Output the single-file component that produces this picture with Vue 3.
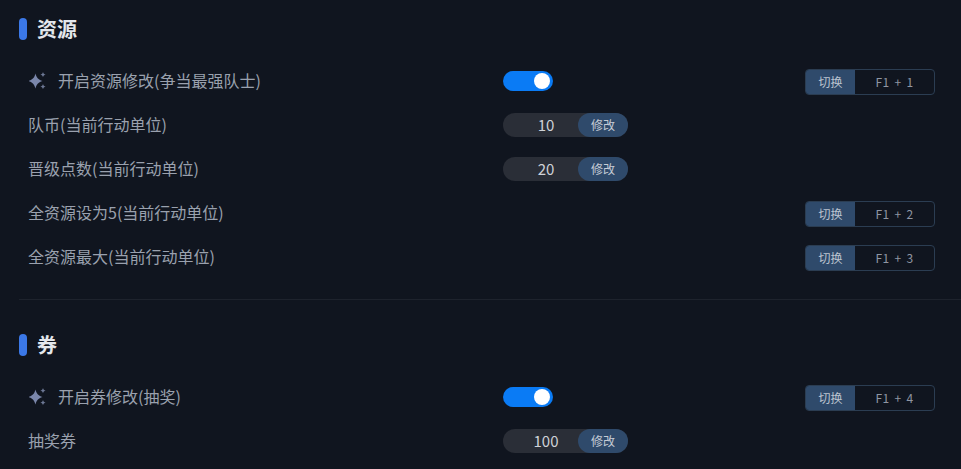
<script setup>
const sections = [
  {
    title: '资源',
    rows: [
      { label: '开启资源修改(争当最强队士)', master: true, key: 'F1 + 1' },
      { label: '队币(当前行动单位)', value: '10' },
      { label: '晋级点数(当前行动单位)', value: '20' },
      { label: '全资源设为5(当前行动单位)', key: 'F1 + 2' },
      { label: '全资源最大(当前行动单位)', key: 'F1 + 3' },
    ],
  },
  {
    title: '券',
    rows: [
      { label: '开启券修改(抽奖)', master: true, key: 'F1 + 4' },
      { label: '抽奖券', value: '100' },
    ],
  },
]
</script>

<template>
  <div class="page">
    <section v-for="(s, i) in sections" :key="s.title" class="section" :class="{ ruled: i === 0 }">
      <h2 class="title"><span class="mark"></span>{{ s.title }}</h2>
      <div v-for="r in s.rows" :key="r.label" class="row">
        <div class="label">
          <svg v-if="r.master" class="spark" viewBox="0 0 18 18" width="18" height="18">
            <path d="M6.5 1.5 C7.6 5.6 9 7.4 13.5 9 C9 10.6 7.6 12.4 6.5 16.5 C5.4 12.4 4 10.6 -0.5 9 C4 7.4 5.4 5.6 6.5 1.5 Z" fill="#7b87ab" />
            <path d="M14 0 C14.4 1.5 15 2.1 16.6 2.6 C15 3.1 14.4 3.7 14 5.2 C13.6 3.7 13 3.1 11.4 2.6 C13 2.1 13.6 1.5 14 0 Z" fill="#6d7895" />
            <path d="M14 12 C14.4 13.5 15 14.1 16.6 14.6 C15 15.1 14.4 15.7 14 17.2 C13.6 15.7 13 15.1 11.4 14.6 C13 14.1 13.6 13.5 14 12 Z" fill="#6d7895" />
          </svg>
          <span class="label-text">{{ r.label }}</span>
        </div>
        <div class="control">
          <div v-if="r.master" class="switch"><span class="knob"></span></div>
          <div v-if="r.value" class="stepper">
            <span class="num">{{ r.value }}</span>
            <span class="edit">修改</span>
          </div>
        </div>
        <div v-if="r.key" class="hotkey">
          <span class="hk-tag">切换</span>
          <span class="hk-key">{{ r.key }}</span>
        </div>
      </div>
    </section>
  </div>
</template>

<style>
html, body { margin: 0; background: #10151f; }
</style>

<style scoped>
.page {
  width: 961px;
  height: 469px;
  overflow: hidden;
  background: #10151f;
  padding-left: 19px;
  box-sizing: border-box;
  font-family: "Noto Sans CJK SC", "Noto Sans", sans-serif;
}
.section { padding-top: 30px; }
.ruled { padding-top: 14px; padding-bottom: 20px; border-bottom: 1px solid #1e232d; }
.title {
  margin: 0 0 16px;
  height: 29px;
  display: flex;
  align-items: center;
  gap: 10px;
  font-size: 20px;
  font-weight: 700;
  color: #e4e7ec;
}
.mark {
  width: 8px;
  height: 22px;
  border-radius: 4px;
  background: #3b78e7;
}
.row {
  height: 44px;
  display: flex;
  align-items: center;
  padding-left: 10px;
  color: #9aa1ae;
  font-size: 16px;
}
.label {
  width: 474px;
  display: flex;
  align-items: center;
  gap: 12px;
}
.label-text { padding-bottom: 2px; margin-left: -1px; }
.spark { flex: none; }
.control { width: 302px; display: flex; align-items: center; }
.switch {
  width: 50px;
  height: 20px;
  border-radius: 10px;
  background: #0a7bf5;
  position: relative;
}
.knob {
  position: absolute;
  right: 3px;
  top: 2px;
  width: 16px;
  height: 16px;
  border-radius: 50%;
  background: #fff;
}
.stepper {
  width: 125px;
  height: 24px;
  border-radius: 12px;
  background: #2a2e37;
  display: flex;
  align-items: center;
}
.num {
  flex: 1;
  text-align: center;
  color: #cfd2d8;
  font-size: 15px;
  padding-left: 11px;
  padding-bottom: 2px;
}
.edit {
  width: 50px;
  height: 24px;
  line-height: 23px;
  border-radius: 12px;
  background: #2f4a6b;
  color: #c6ccd6;
  font-size: 12px;
  text-align: center;
}
.hotkey {
  width: 130px;
  height: 26px;
  margin-top: 2px;
  box-sizing: border-box;
  border: 1px solid #2b3d52;
  border-radius: 4px;
  display: flex;
  overflow: hidden;
  font-size: 12px;
  line-height: 24px;
}
.hk-tag { width: 49px; background: #2f4a6b; color: #bcc4d0; text-align: center; }
.hk-key { flex: 1; text-align: center; color: #8f96a3; word-spacing: 2px; letter-spacing: 0.3px; }
</style>
